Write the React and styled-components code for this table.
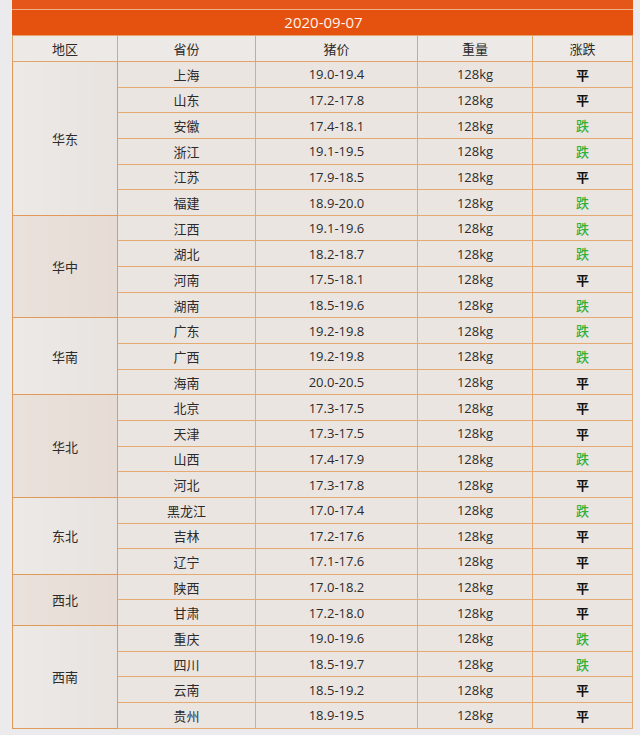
import styled, { createGlobalStyle } from 'styled-components'

const GlobalStyle = createGlobalStyle`
	html, body {
		margin: 0;
		padding: 0;
		background: #ebebee;
	}
	body {
		font-family: "Noto Sans", "Noto Sans CJK SC", sans-serif;
	}
`

const regions = [
	{
		name: '华东',
		rows: [
			['上海', '19.0-19.4', '平'],
			['山东', '17.2-17.8', '平'],
			['安徽', '17.4-18.1', '跌'],
			['浙江', '19.1-19.5', '跌'],
			['江苏', '17.9-18.5', '平'],
			['福建', '18.9-20.0', '跌'],
		],
	},
	{
		name: '华中',
		rows: [
			['江西', '19.1-19.6', '跌'],
			['湖北', '18.2-18.7', '跌'],
			['河南', '17.5-18.1', '平'],
			['湖南', '18.5-19.6', '跌'],
		],
	},
	{
		name: '华南',
		rows: [
			['广东', '19.2-19.8', '跌'],
			['广西', '19.2-19.8', '跌'],
			['海南', '20.0-20.5', '平'],
		],
	},
	{
		name: '华北',
		rows: [
			['北京', '17.3-17.5', '平'],
			['天津', '17.3-17.5', '平'],
			['山西', '17.4-17.9', '跌'],
			['河北', '17.3-17.8', '平'],
		],
	},
	{
		name: '东北',
		rows: [
			['黑龙江', '17.0-17.4', '跌'],
			['吉林', '17.2-17.6', '平'],
			['辽宁', '17.1-17.6', '平'],
		],
	},
	{
		name: '西北',
		rows: [
			['陕西', '17.0-18.2', '平'],
			['甘肃', '17.2-18.0', '平'],
		],
	},
	{
		name: '西南',
		rows: [
			['重庆', '19.0-19.6', '跌'],
			['四川', '18.5-19.7', '跌'],
			['云南', '18.5-19.2', '平'],
			['贵州', '18.9-19.5', '平'],
		],
	},
]

function App() {
	return (
		<>
			<GlobalStyle />
			<Page>
				<Sheet>
					<TopStrip />
					<Title>2020-09-07</Title>
					<Table>
						<colgroup>
							<col style={{ width: 105 }} />
							<col style={{ width: 138 }} />
							<col style={{ width: 162 }} />
							<col style={{ width: 115 }} />
							<col />
						</colgroup>
						<thead>
							<tr>
								<Head>地区</Head>
								<Head>省份</Head>
								<Head>猪价</Head>
								<Head>重量</Head>
								<Head>涨跌</Head>
							</tr>
						</thead>
						<tbody>
							{regions.map((region, ri) =>
								region.rows.map((row, i) => (
									<Row key={row[0]}>
										{i === 0 && (
											<Region rowSpan={region.rows.length} $alt={ri % 2 === 1}>
												{region.name}
											</Region>
										)}
										<Cell>{row[0]}</Cell>
										<Cell $num>{row[1]}</Cell>
										<Cell $num>128kg</Cell>
										<Trend $down={row[2] === '跌'}>{row[2]}</Trend>
									</Row>
								))
							)}
						</tbody>
					</Table>
				</Sheet>
			</Page>
		</>
	)
}

export default App

const Page = styled.div`
	width: 640px;
	height: 735px;
	padding-left: 12px;
	box-sizing: border-box;
	overflow: hidden;
`
const Sheet = styled.div`
	width: 621px;
`
const TopStrip = styled.div`
	height: 9px;
	background: #e5561a;
	border-bottom: 1px solid #f2b08a;
`
const Title = styled.div`
	height: 25px;
	line-height: 25px;
	background: #e5510e;
	color: #fff4ec;
	text-align: center;
	font-family: "Open Sans", "Noto Sans", sans-serif;
	font-size: 15px;
	padding-left: 2px;
`
const Table = styled.table`
	width: 621px;
	border-collapse: collapse;
	table-layout: fixed;
	font-size: 13px;
	color: #2b2b2b;
	background: #ebe5e2;
	border: 1px solid #df9a5c;
`
const Head = styled.th`
	height: 25px;
	padding: 0;
	font-weight: 400;
	font-family: "Noto Sans CJK SC", sans-serif;
	background: #ede9e6;
	border: 1px solid #e1a56c;
`
const Row = styled.tr`
	height: 25.65px;
`
const Cell = styled.td`
	padding: 0;
	text-align: center;
	border: 1px solid #e5aa72;
	font-family: ${({ $num }) =>
		$num ? '"Open Sans", "Noto Sans", sans-serif' : '"Noto Sans CJK SC", sans-serif'};
	background: #ebe5e2;
`
const Region = styled.td`
	padding: 0;
	text-align: center;
	border: 1px solid #df9a5c;
	font-family: "Noto Sans CJK SC", sans-serif;
	background: ${({ $alt }) =>
		$alt
			? 'linear-gradient(90deg, #e9e1db, #e6dcd5)'
			: 'linear-gradient(90deg, #ece9e7, #e8e3df)'};
`
const Trend = styled.td`
	padding: 0;
	text-align: center;
	border: 1px solid #e5aa72;
	font-family: "Noto Sans CJK SC", sans-serif;
	font-weight: ${({ $down }) => ($down ? 500 : 700)};
	color: ${({ $down }) => ($down ? '#32b032' : '#111')};
	background: #ebe5e2;
`
